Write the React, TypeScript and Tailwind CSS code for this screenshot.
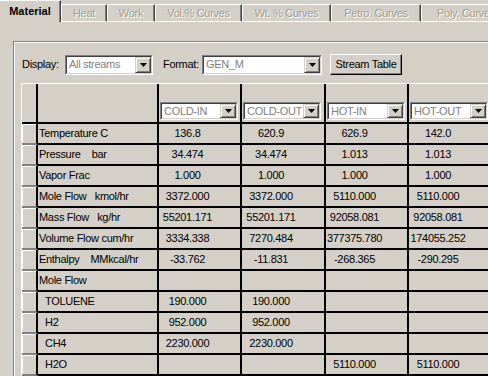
import React from 'react';

const tabs = [
  { label: 'Material', w: 'w-[61px]', active: true },
  { label: 'Heat', w: 'w-[46px]' },
  { label: 'Work', w: 'w-[48px]' },
  { label: 'Vol.% Curves', w: 'w-[87px]' },
  { label: 'Wt. % Curves', w: 'w-[89px]' },
  { label: 'Petro. Curves', w: 'w-[90px]' },
  { label: 'Poly. Curves', w: 'w-[90px]' },
];

const streams = ['COLD-IN', 'COLD-OUT', 'HOT-IN', 'HOT-OUT'];

const rows = [
  { label: 'Temperature C', v: ['136.8', '620.9', '626.9', '142.0'] },
  { label: 'Pressure    bar', v: ['34.474', '34.474', '1.013', '1.013'] },
  { label: 'Vapor Frac', v: ['1.000', '1.000', '1.000', '1.000'] },
  { label: 'Mole Flow   kmol/hr', v: ['3372.000', '3372.000', '5110.000', '5110.000'] },
  { label: 'Mass Flow   kg/hr', v: ['55201.171', '55201.171', '92058.081', '92058.081'] },
  { label: 'Volume Flow cum/hr', v: ['3334.338', '7270.484', '377375.780', '174055.252'] },
  { label: 'Enthalpy    MMkcal/hr', v: ['-33.762', '-11.831', '-268.365', '-290.295'] },
  { label: 'Mole Flow', v: ['', '', '', ''] },
  { label: 'TOLUENE', sub: true, v: ['190.000', '190.000', '', ''] },
  { label: 'H2', sub: true, v: ['952.000', '952.000', '', ''] },
  { label: 'CH4', sub: true, v: ['2230.000', '2230.000', '', ''] },
  { label: 'H2O', sub: true, v: ['', '', '5110.000', '5110.000'] },
];

const Arrow = () => (
  <svg width="7" height="4" viewBox="0 0 7 4">
    <polygon points="0,0 7,0 3.5,4" fill="#000" />
  </svg>
);

// classic sunken combobox
const Combo = ({ text, className }: { text: string; className: string }) => (
  <div className={`border border-t-[#808080] border-l-[#808080] border-b-white border-r-white ${className}`}>
    <div className="flex h-full border border-t-[#404040] border-l-[#404040] border-b-[#d4d0c8] border-r-[#d4d0c8] bg-white">
      <div className="flex-1 pl-[2px] flex items-center text-[#808080] overflow-hidden whitespace-nowrap">{text}</div>
      <div className="w-[16px] flex items-center justify-center bg-[#d4d0c8] border border-t-[#d4d0c8] border-l-[#d4d0c8] border-b-[#404040] border-r-[#404040] shadow-[inset_1px_1px_0_#fff,inset_-1px_-1px_0_#808080]">
        <Arrow />
      </div>
    </div>
  </div>
);

export default function App() {
  return (
    <div className="w-[488px] h-[376px] overflow-hidden bg-[#d4d0c8] font-['Liberation_Sans',Arial,sans-serif] text-[11px] tracking-[-0.3px] text-black flex flex-col">
      {/* tab strip */}
      <div className="flex items-end h-[22px] shrink-0">
        {tabs.map((t) =>
          t.active ? (
            <div
              key={t.label}
              className={`${t.w} shrink-0 h-[22px] flex items-center justify-center font-bold tracking-normal border-t border-white border-r border-r-[#404040] shadow-[inset_-1px_0_0_#808080]`}
            >
              {t.label}
            </div>
          ) : (
            <div
              key={t.label}
              className={`${t.w} shrink-0 h-[18px] flex items-center justify-center border-t border-l border-b border-white border-r border-r-[#404040] shadow-[inset_-1px_0_0_#808080] text-[#a19c90] [text-shadow:1px_1px_0_#fff] whitespace-nowrap`}
            >
              {t.label}
            </div>
          )
        )}
        <div className="flex-1 h-[1px] bg-white" />
      </div>

      {/* panel frame */}
      <div className="ml-[13px] mt-[19px] flex-1 border-l border-t border-[#808080] shadow-[inset_1px_1px_0_#fff]">
        <div className="pt-[12px] pl-[8px] flex items-center h-[33px]">
          <div className="w-[43px]">Display:</div>
          <Combo text="All streams" className="w-[88px] h-[20px]" />
          <div className="ml-[10px] w-[39px]">Format:</div>
          <Combo text="GEN_M" className="w-[120px] h-[20px]" />
          <button className="ml-[8px] w-[72px] h-[21px] border border-t-white border-l-white border-b-black border-r-black shadow-[inset_-1px_-1px_0_#808080] flex items-center justify-center">
            Stream Table
          </button>
        </div>

        {/* stream grid */}
        <div className="ml-[7px] mt-[8px] grid grid-cols-[16px_121px_83px_84px_83px_84px] w-max border-t border-l border-white">
          <div className="h-[40px] border-r-2 border-b-2 border-black" />
          <div className="h-[40px] border-r-2 border-b-2 border-black" />
          {streams.map((s) => (
            <div key={s} className="h-[40px] border-r-2 border-b-2 border-black flex items-end pb-[2px] pl-[1px]">
              <Combo text={s} className="w-[78px] h-[18px]" />
            </div>
          ))}
          {rows.map((r) => (
            <React.Fragment key={r.label}>
              <div className="h-[21px] border-r-2 border-black border-b-2 border-b-[#808080] shadow-[inset_1px_1px_0_#fff]" />
              <div className={`h-[21px] border-r-2 border-b-2 border-black flex items-center whitespace-pre ${r.sub ? 'pl-[7px]' : 'pl-[1px]'}`}>
                {r.label}
              </div>
              {r.v.map((v, i) => (
                <div key={i} className="h-[21px] border-r-2 border-b-2 border-black flex items-center justify-center pr-[24px] whitespace-nowrap">
                  {v}
                </div>
              ))}
            </React.Fragment>
          ))}
        </div>
      </div>
    </div>
  );
}
